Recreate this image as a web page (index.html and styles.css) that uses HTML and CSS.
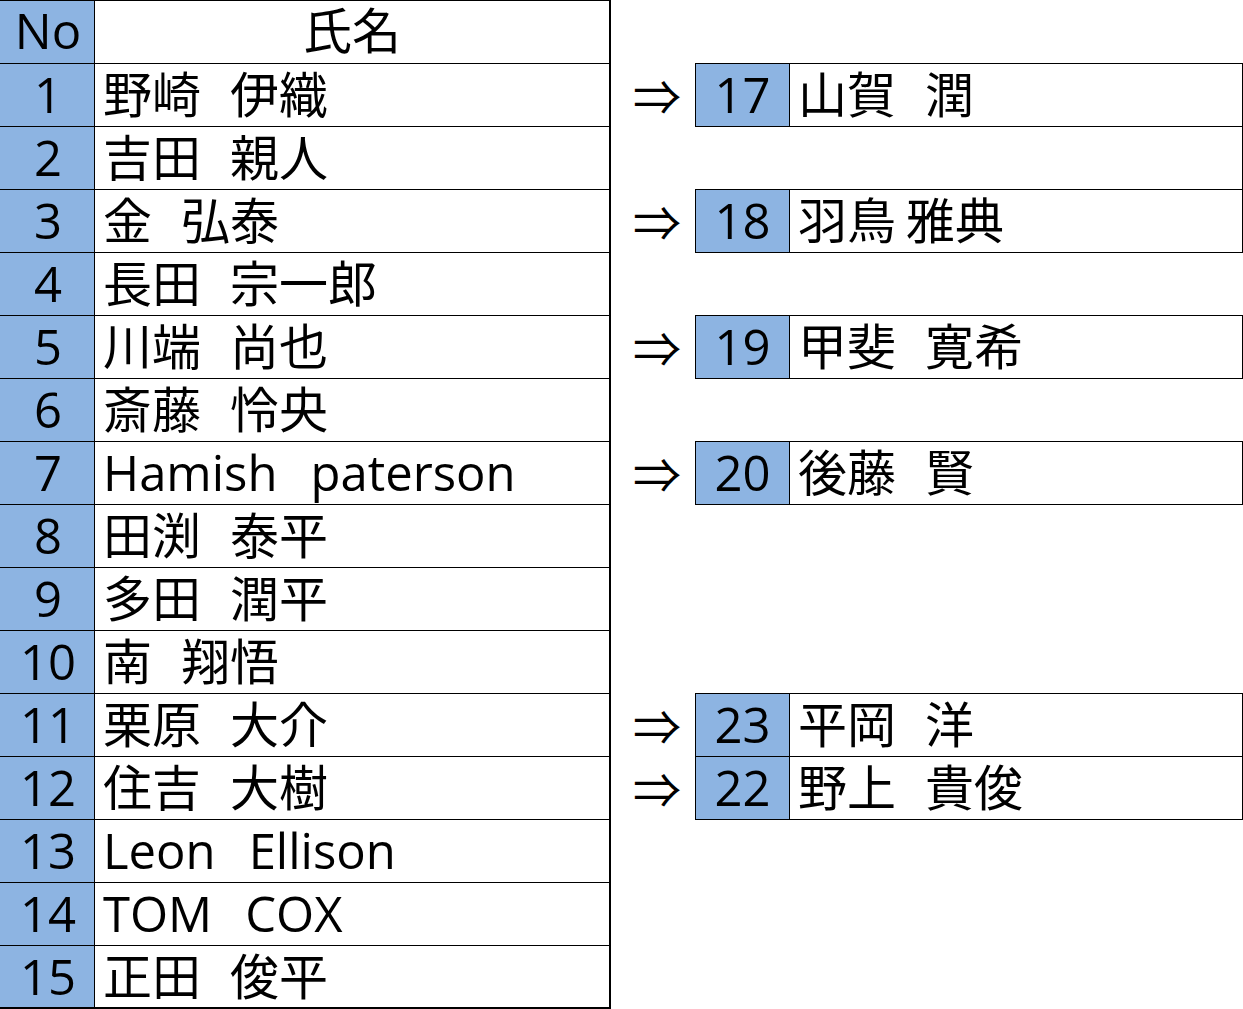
FILE: index.html
```html
<!DOCTYPE html>
<html lang="ja">
<head>
<meta charset="utf-8">
<title>名簿</title>
<link rel="stylesheet" href="styles.css">
</head>
<body>
<div class="sheet">
  <!-- header -->
  <div class="c no hd">No</div>
  <div class="c nm hd ctr">氏名</div>
  <div class="c gap hdgap"></div>
  <div class="c gap hdgap"></div>
  <div class="c gap hdgap"></div>

  <!-- 1 -->
  <div class="c no">1</div>
  <div class="c nm"><span>野崎</span><span class="g">伊織</span></div>
  <div class="c arr">⇒</div>
  <div class="c rno">17</div>
  <div class="c rnm"><span>山賀</span><span class="g">潤</span></div>

  <!-- 2 -->
  <div class="c no">2</div>
  <div class="c nm"><span>吉田</span><span class="g">親人</span></div>
  <div class="c gap"></div>
  <div class="c gap"></div>
  <div class="c gap redge"></div>

  <!-- 3 -->
  <div class="c no">3</div>
  <div class="c nm"><span>金</span><span class="g">弘泰</span></div>
  <div class="c arr">⇒</div>
  <div class="c rno">18</div>
  <div class="c rnm"><span>羽鳥</span><span class="g s">雅典</span></div>

  <!-- 4 -->
  <div class="c no">4</div>
  <div class="c nm"><span>長田</span><span class="g">宗一郎</span></div>
  <div class="c gap"></div>
  <div class="c gap"></div>
  <div class="c gap"></div>

  <!-- 5 -->
  <div class="c no">5</div>
  <div class="c nm"><span>川端</span><span class="g">尚也</span></div>
  <div class="c arr">⇒</div>
  <div class="c rno">19</div>
  <div class="c rnm"><span>甲斐</span><span class="g">寛希</span></div>

  <!-- 6 -->
  <div class="c no">6</div>
  <div class="c nm"><span>斎藤</span><span class="g">怜央</span></div>
  <div class="c gap"></div>
  <div class="c gap"></div>
  <div class="c gap"></div>

  <!-- 7 -->
  <div class="c no">7</div>
  <div class="c nm"><span>Hamish</span><span class="gl">paterson</span></div>
  <div class="c arr">⇒</div>
  <div class="c rno">20</div>
  <div class="c rnm"><span>後藤</span><span class="g">賢</span></div>

  <!-- 8 -->
  <div class="c no">8</div>
  <div class="c nm"><span>田渕</span><span class="g">泰平</span></div>
  <div class="c gap"></div>
  <div class="c gap"></div>
  <div class="c gap"></div>

  <!-- 9 -->
  <div class="c no">9</div>
  <div class="c nm"><span>多田</span><span class="g">潤平</span></div>
  <div class="c gap"></div>
  <div class="c gap"></div>
  <div class="c gap"></div>

  <!-- 10 -->
  <div class="c no">10</div>
  <div class="c nm"><span>南</span><span class="g">翔悟</span></div>
  <div class="c gap"></div>
  <div class="c gap"></div>
  <div class="c gap"></div>

  <!-- 11 -->
  <div class="c no">11</div>
  <div class="c nm"><span>栗原</span><span class="g">大介</span></div>
  <div class="c arr">⇒</div>
  <div class="c rno">23</div>
  <div class="c rnm"><span>平岡</span><span class="g">洋</span></div>

  <!-- 12 -->
  <div class="c no">12</div>
  <div class="c nm"><span>住吉</span><span class="g">大樹</span></div>
  <div class="c arr">⇒</div>
  <div class="c rno">22</div>
  <div class="c rnm"><span>野上</span><span class="g">貴俊</span></div>

  <!-- 13 -->
  <div class="c no">13</div>
  <div class="c nm"><span>Leon</span><span class="gl">Ellison</span></div>
  <div class="c gap"></div>
  <div class="c gap"></div>
  <div class="c gap"></div>

  <!-- 14 -->
  <div class="c no">14</div>
  <div class="c nm"><span>TOM</span><span class="gl">COX</span></div>
  <div class="c gap"></div>
  <div class="c gap"></div>
  <div class="c gap"></div>

  <!-- 15 -->
  <div class="c no last">15</div>
  <div class="c nm last"><span>正田</span><span class="g">俊平</span></div>
  <div class="c gap"></div>
  <div class="c gap"></div>
  <div class="c gap"></div>
</div>
</body>
</html>
```

FILE: styles.css
```css
* {
  box-sizing: border-box;
}

html, body {
  margin: 0;
  padding: 0;
  background: #ffffff;
}

.sheet {
  display: grid;
  grid-template-columns: 95px 516px 84px 95px 453px;
  grid-template-rows: 64px repeat(15, 63px);
  width: 1243px;
  font-family: "Open Sans", "Noto Sans CJK JP", sans-serif;
  font-size: 49px;
  color: #000000;
}

.c {
  padding-top: 2px;
  line-height: 57px;
  white-space: nowrap;
  overflow: visible;
}

.no {
  background: #8db4e2;
  border-right: 1px solid #000;
  border-bottom: 1px solid #000;
  text-align: center;
  padding-left: 2px;
}

.nm {
  background: #ffffff;
  border-right: 2px solid #000;
  border-bottom: 1px solid #000;
  padding-left: 8px;
}

.hd {
  border-top: 1px solid #000;
  padding-top: 1px;
}

.ctr {
  text-align: center;
  padding-left: 0;
}

.last {
  border-bottom: 2px solid #000;
}

.g {
  margin-left: 29px;
}

.g.s {
  margin-left: 10px;
}

.gl {
  margin-left: 33px;
}

.arr {
  font-family: "Noto Sans CJK JP", sans-serif;
  font-size: 48px;
  padding-left: 22px;
}

.rno {
  margin-top: -1px;
  background: #8db4e2;
  border: 1px solid #000;
  text-align: center;
}

.rnm {
  margin-top: -1px;
  border-top: 1px solid #000;
  border-bottom: 1px solid #000;
  border-right: 1px solid #000;
  padding-left: 8px;
}

.redge {
  border-right: 1px solid #000;
}
```
